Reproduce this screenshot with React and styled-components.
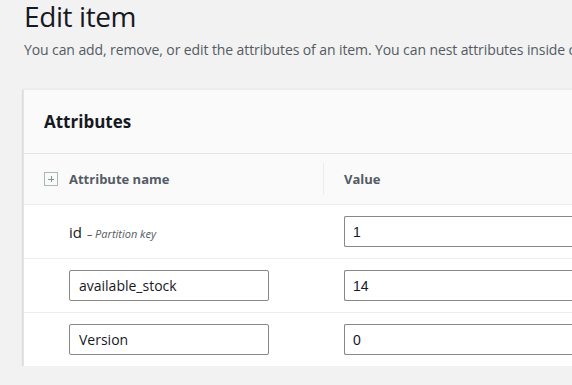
import React from 'react'
import styled, { createGlobalStyle } from 'styled-components'

const Global = createGlobalStyle`
  body {
    margin: 0;
    background: #f2f2f2;
    font-family: "Open Sans", "Noto Sans", sans-serif;
    overflow: hidden;
  }
`

const Page = styled.div`
  padding: 0 0 0 23px;
  width: 700px;
`

const Title = styled.h1`
  margin: 0;
  padding: 0 0 0 1px;
  font-size: 28px;
  font-weight: 400;
  letter-spacing: -0.4px;
  line-height: 32px;
  color: #16191f;
`

const Lead = styled.p`
  margin: 8px 0 0;
  padding-left: 1px;
  font-size: 14px;
  letter-spacing: -0.1px;
  line-height: 20px;
  color: #545b64;
  white-space: nowrap;
`

const Card = styled.section`
  margin-top: 29px;
  background: #fafafa;
  border-left: 1px solid #e4e4e4;
  border-top: 1px solid #eaeded;
  box-shadow: 0 1px 2px rgba(0, 28, 36, 0.3);
`

const CardHead = styled.div`
  height: 63px;
  display: flex;
  align-items: center;
  padding-left: 20px;
  border-bottom: 1px solid #e5e5e5;
  h2 {
    margin: 0;
    font-size: 17px;
    font-weight: 700;
    color: #16191f;
  }
`

const Row = styled.div`
  display: grid;
  grid-template-columns: 25px 254px 1fr;
  align-items: center;
  height: ${p => (p.head ? 50 : 53)}px;
  padding-left: 20px;
  background: ${p => (p.head ? '#fafafa' : '#fff')};
  border-bottom: ${p => (p.last ? 'none' : '1px solid #eaeded')};
`

const HeadCell = styled.div`
  font-size: 13px;
  font-weight: 700;
  color: #545b64;
  height: 32px;
  display: flex;
  align-items: center;
  ${p => p.divided && `border-left: 1px solid #eaeded; padding-left: 20px;`}
`

const Cell = styled.div`
  padding-left: ${p => (p.value ? 21 : 0)}px;
`

const Expand = styled.span`
  display: inline-block;
  width: 12px;
  height: 12px;
  border: 1px solid #aab7b8;
  position: relative;
  &::before, &::after {
    content: '';
    position: absolute;
    background: #879596;
  }
  &::before { left: 3px; top: 5.5px; width: 6px; height: 1px; }
  &::after { left: 5.5px; top: 3px; width: 1px; height: 6px; }
`

const KeyName = styled.span`
  font-size: 15px;
  color: #16191f;
`

const KeyNote = styled.span`
  margin-left: 5px;
  font-size: 11px;
  font-style: italic;
  color: #545b64;
`

const Input = styled.input`
  box-sizing: border-box;
  width: ${p => (p.wide ? '260px' : '200px')};
  height: 31px;
  padding: 0 ${p => (p.wide ? 8 : 9)}px;
  border: 1px solid #888;
  border-radius: 2px;
  ${p => p.wide && 'border-right: none;'}
  background: #fff;
  font-family: ${p => (p.wide ? '"Liberation Sans", Arial' : '"Open Sans"')}, sans-serif;
  font-size: 14px;
  color: #16191f;
  outline: none;
`

const rows = [
  { key: 'id', value: '1' },
  { name: 'available_stock', value: '14' },
  { name: 'Version', value: '0' },
]

export default function App() {
  return (
    <Page>
      <Global />
      <Title>Edit item</Title>
      <Lead>
        You can add, remove, or edit the attributes of an item. You can nest attributes inside other attributes up to 32 levels deep.
      </Lead>
      <Card>
        <CardHead>
          <h2>Attributes</h2>
        </CardHead>
        <Row head>
          <Expand />
          <HeadCell>Attribute name</HeadCell>
          <HeadCell divided>Value</HeadCell>
        </Row>
        {rows.map((r, i) => (
          <Row key={i} last={i === rows.length - 1}>
            <span />
            <Cell>
              {r.key ? (
                <>
                  <KeyName>{r.key}</KeyName>
                  <KeyNote>– Partition key</KeyNote>
                </>
              ) : (
                <Input defaultValue={r.name} />
              )}
            </Cell>
            <Cell value>
              <Input wide defaultValue={r.value} />
            </Cell>
          </Row>
        ))}
      </Card>
    </Page>
  )
}
